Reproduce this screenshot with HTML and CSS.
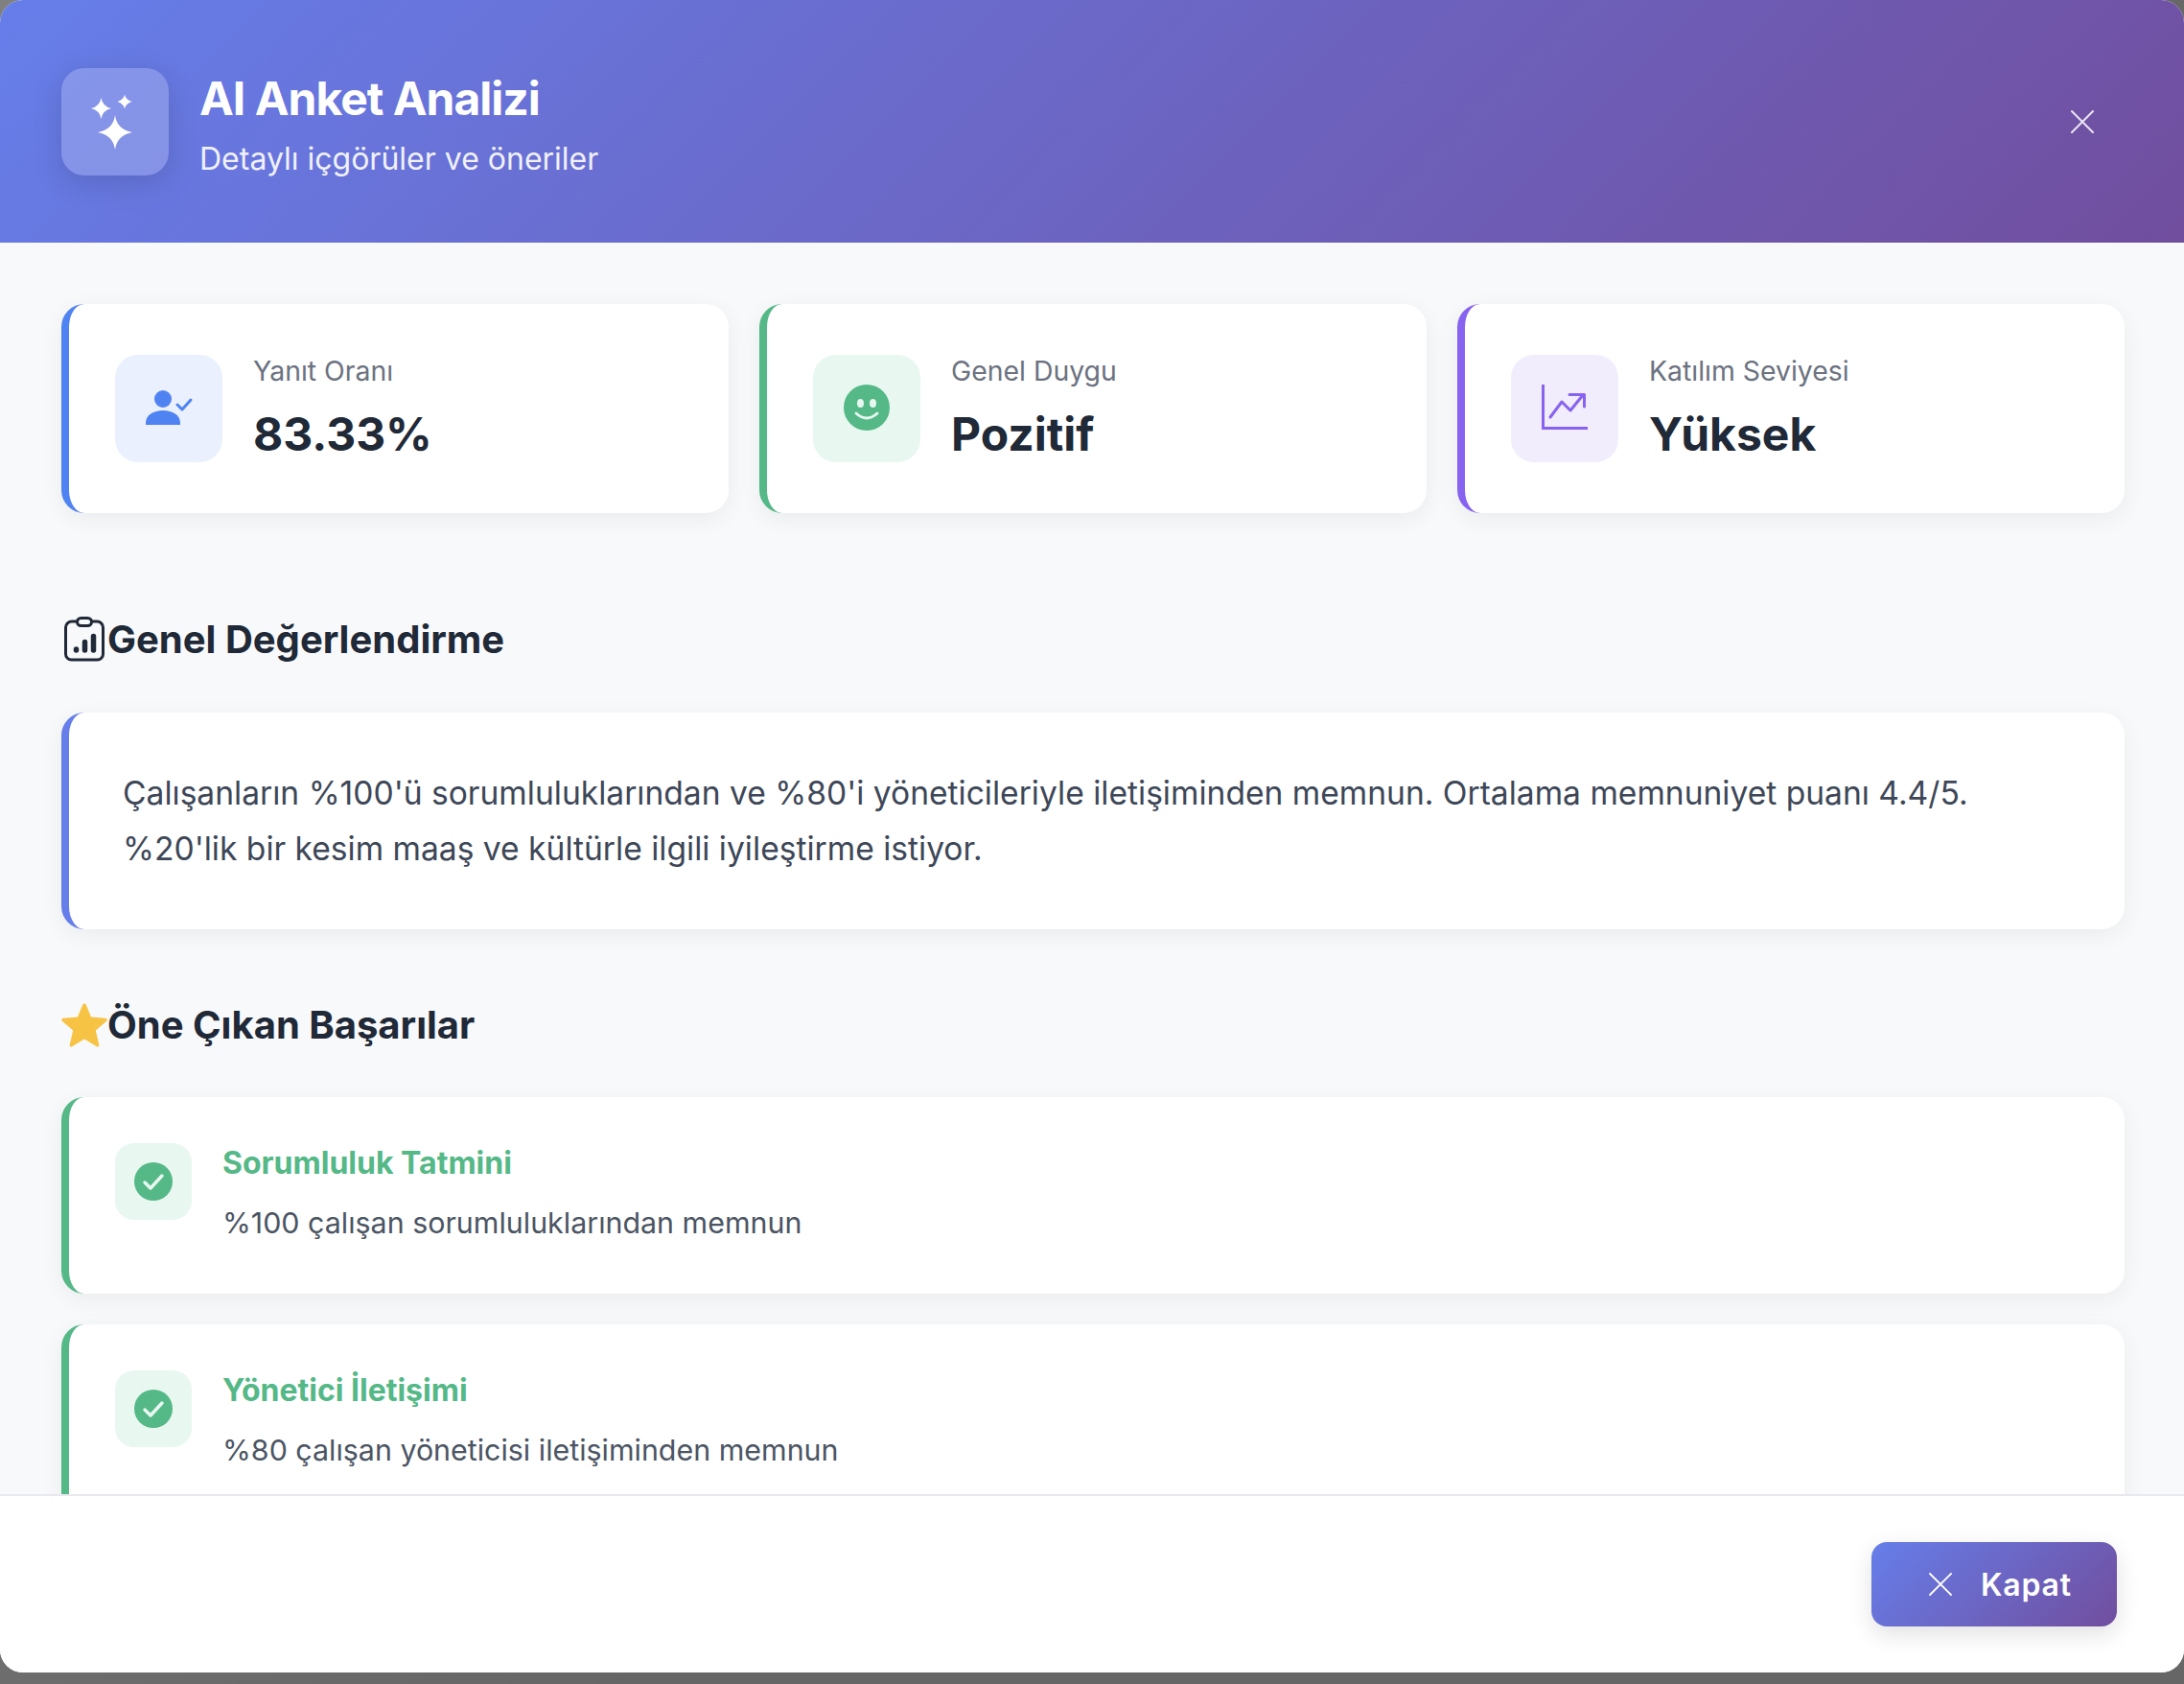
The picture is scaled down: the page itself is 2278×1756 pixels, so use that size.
FILE: index.html
```html
<!DOCTYPE html>
<html lang="tr">
<head>
    <meta charset="UTF-8">
    <meta name="viewport" content="width=device-width, initial-scale=1.0">
    <title>AI Anket Analizi</title>
    <link rel="stylesheet" href="styles.css">
</head>
<body>
    <div class="modal">
        <div class="modal-header">
            <div class="header-left">
                <div class="header-icon">
                    <svg width="112" height="112" viewBox="64 70 112 112" fill="#fff">
                        <path d="M120 119Q122 134 138 137Q122 140 120 155Q118 140 102 137Q118 134 120 119Z"/>
                        <path d="M105.500 101Q107 110 116 112Q107 114 105.500 123Q104 114 95 112Q104 110 105.500 101Z"/>
                        <path d="M130 97.500Q131 103 137.500 105Q131 107 130 112.500Q129 107 122.500 105Q129 103 130 97.500Z"/>
                    </svg>
                </div>
                <div class="header-text">
                    <h2 class="header-title">AI Anket Analizi</h2>
                    <p class="header-sub">Detaylı içgörüler ve öneriler</p>
                </div>
            </div>
            <svg class="header-close" width="24" height="24" viewBox="0 0 24 24" fill="none" stroke="#fff" stroke-opacity="0.85" stroke-width="2" stroke-linecap="round">
                <path d="M1 1L23 23M23 1L1 23"/>
            </svg>
        </div>

        <div class="modal-body">
            <div class="stats">
                <div class="stat-card blue">
                    <div class="stat-icon">
                        <svg width="112" height="112" viewBox="120 370 112 112">
                            <circle cx="170" cy="416" r="9" fill="#4f83f1"/>
                            <path d="M152 443V441C152 433 160 428 170 428C180 428 188 433 188 441V443Z" fill="#4f83f1"/>
                            <path d="M185 422L190 427L199 417" fill="none" stroke="#4f83f1" stroke-width="3" stroke-linecap="round" stroke-linejoin="round"/>
                        </svg>
                    </div>
                    <div>
                        <div class="stat-label">Yanıt Oranı</div>
                        <div class="stat-value">83.33%</div>
                    </div>
                </div>
                <div class="stat-card green">
                    <div class="stat-icon">
                        <svg width="112" height="112" viewBox="848 370 112 112">
                            <circle cx="904" cy="425" r="24" fill="#54b887"/>
                            <ellipse cx="897.500" cy="420.500" rx="3.500" ry="4.500" fill="#e8f7f0"/>
                            <ellipse cx="910.500" cy="420.500" rx="3.500" ry="4.500" fill="#e8f7f0"/>
                            <path d="M893 431Q904 441 915 431" fill="none" stroke="#e8f7f0" stroke-width="3" stroke-linecap="round"/>
                        </svg>
                    </div>
                    <div>
                        <div class="stat-label">Genel Duygu</div>
                        <div class="stat-value">Pozitif</div>
                    </div>
                </div>
                <div class="stat-card purple">
                    <div class="stat-icon">
                        <svg width="112" height="112" viewBox="1576 370 112 112" fill="none" stroke="#8763f0" stroke-width="3">
                            <path d="M1609.500 401V446.500H1656"/>
                            <path d="M1617 435L1629 419L1638 428L1651 412M1637 411.500H1652.500V424" stroke-linecap="round" stroke-linejoin="round"/>
                        </svg>
                    </div>
                    <div>
                        <div class="stat-label">Katılım Seviyesi</div>
                        <div class="stat-value">Yüksek</div>
                    </div>
                </div>
            </div>

            <h3 class="section-title">
                <svg class="section-icon" width="48" height="48" viewBox="64 643 48 48" fill="none" stroke="#1f2937" stroke-width="3">
                    <path d="M80 648H75A6.500 6.500 0 0 0 68.500 654.500V682A6 6 0 0 0 74.500 688H101.500A6 6 0 0 0 107.500 682V654.500A6.500 6.500 0 0 0 101 648H96"/>
                    <rect x="80.500" y="644.500" width="15" height="8" rx="4"/>
                    <path d="M79.500 677V678M88.500 669.500V678M97.500 663.500V678" stroke-width="5.500" stroke-linecap="round"/>
                </svg>
                Genel Değerlendirme
            </h3>
            <div class="summary-card">
                Çalışanların %100'ü sorumluluklarından ve %80'i yöneticileriyle iletişiminden memnun. Ortalama memnuniyet puanı 4.4/5. %20'lik bir kesim maaş ve kültürle ilgili iyileştirme istiyor.
            </div>

            <h3 class="section-title title-second">
                <svg class="section-icon" width="48" height="48" viewBox="0 0 48 48">
                    <path d="M24 1.500C24.800 1.500 25.400 2 25.800 2.800L31 15.500L46 16.800C47.800 17 48.200 18.600 47.200 19.700L35.800 29.500L39.300 44.500C39.600 46 38.200 47.200 36.800 46.300L24 38.500L11.200 46.300C9.800 47.200 8.400 46 8.700 44.500L12.200 29.500L0.800 19.700C-0.200 18.600 0.200 17 2 16.800L17 15.500L22.200 2.800C22.600 2 23.200 1.500 24 1.500Z" fill="#f6c344"/>
                </svg>
                Öne Çıkan Başarılar
            </h3>
            <div class="item-card">
                <div class="item-icon">
                    <svg width="80" height="80" viewBox="0 0 80 80">
                        <circle cx="40" cy="40" r="20" fill="#54b887"/>
                        <path d="M31 41L37 47L49 34" fill="none" stroke="#e8f7f0" stroke-width="3.500" stroke-linecap="round" stroke-linejoin="round"/>
                    </svg>
                </div>
                <div>
                    <div class="item-title">Sorumluluk Tatmini</div>
                    <div class="item-text">%100 çalışan sorumluluklarından memnun</div>
                </div>
            </div>
            <div class="item-card">
                <div class="item-icon">
                    <svg width="80" height="80" viewBox="0 0 80 80">
                        <circle cx="40" cy="40" r="20" fill="#54b887"/>
                        <path d="M31 41L37 47L49 34" fill="none" stroke="#e8f7f0" stroke-width="3.500" stroke-linecap="round" stroke-linejoin="round"/>
                    </svg>
                </div>
                <div>
                    <div class="item-title">Yönetici İletişimi</div>
                    <div class="item-text">%80 çalışan yöneticisi iletişiminden memnun</div>
                </div>
            </div>
        </div>

        <div class="modal-footer">
            <button class="close-btn">
                <svg width="24" height="24" viewBox="0 0 24 24" fill="none" stroke="#fff" stroke-width="1.800" stroke-linecap="round">
                    <path d="M1 1L23 23M23 1L1 23"/>
                </svg>
                Kapat
            </button>
        </div>
    </div>
</body>
</html>
```
FILE: styles.css
```css
* {
    box-sizing: border-box;
}
body {
    font-family: Inter, "Noto Sans", sans-serif;
    background: linear-gradient(135deg, #808080, #666666 60%);
    margin: 0;
    height: 100vh;
    overflow: hidden;
}
.modal {
    height: 1744px;
    display: flex;
    flex-direction: column;
    background: white;
    border-radius: 24px;
    overflow: hidden;
}
.modal-header {
    flex: none;
    height: 253px;
    padding: 0 64px;
    display: flex;
    align-items: center;
    justify-content: space-between;
    background: linear-gradient(135deg, #667eea 0%, #714e9e 100%);
    color: white;
}
.header-left {
    display: flex;
    align-items: center;
    gap: 32px;
}
.header-icon {
    width: 112px;
    height: 112px;
    border-radius: 24px;
    background: rgba(255, 255, 255, 0.2);
    box-shadow: 0 8px 32px rgba(0, 0, 0, 0.14);
}
.header-icon svg {
    display: block;
}
.header-text {
    padding-top: 6px;
}
.header-title {
    font-size: 48px;
    font-weight: 700;
    letter-spacing: -1px;
    line-height: 58px;
    margin: 0 0 14px;
}
.header-sub {
    font-size: 32px;
    line-height: 40px;
    margin: 0;
    opacity: 0.9;
}
.header-close {
    margin-right: 30px;
}
.modal-body {
    flex: 1;
    min-height: 0;
    overflow: hidden;
    padding: 64px 62px 0 64px;
    background: #f8f9fa;
}
.stats {
    display: grid;
    grid-template-columns: repeat(3, 1fr);
    gap: 32px;
}
.stat-card {
    height: 218px;
    padding: 0 48px;
    display: flex;
    align-items: center;
    gap: 32px;
    background: white;
    border-radius: 24px;
    border-left: 8px solid;
    box-shadow: 0 6px 24px rgba(0, 0, 0, 0.06);
}
.stat-icon {
    width: 112px;
    height: 112px;
    border-radius: 24px;
}
.stat-icon svg {
    display: block;
}
.stat-card.blue {
    border-color: #4f83f1;
}
.stat-card.blue .stat-icon {
    background: #eaf0fd;
}
.stat-card.green {
    border-color: #54b887;
}
.stat-card.green .stat-icon {
    background: #e8f7f0;
}
.stat-card.purple {
    border-color: #8763f0;
}
.stat-card.purple .stat-icon {
    background: #f1edfd;
}
.stat-label {
    font-size: 28.4px;
    line-height: 34px;
    color: #6b7280;
    margin-bottom: 20px;
}
.stat-value {
    font-size: 48px;
    font-weight: 700;
    line-height: 58px;
    color: #1f2937;
}
.section-title {
    display: flex;
    align-items: center;
    font-size: 40px;
    font-weight: 700;
    line-height: 48px;
    color: #1f2937;
    margin: 108px 0 52px;
}
.title-second {
    margin: 76px 0 51px;
}
.section-icon {
    flex: none;
}
.summary-card {
    height: 226px;
    padding: 55px 56px;
    font-size: 33.6px;
    line-height: 58px;
    color: #3d4757;
    background: white;
    border-radius: 24px;
    border-left: 8px solid #667eea;
    box-shadow: 0 6px 24px rgba(0, 0, 0, 0.06);
}
.item-card {
    height: 205px;
    padding: 48px;
    margin-bottom: 32px;
    display: flex;
    gap: 32px;
    background: white;
    border-radius: 24px;
    border-left: 8px solid #54b887;
    box-shadow: 0 6px 24px rgba(0, 0, 0, 0.06);
}
.item-icon {
    flex: none;
    width: 80px;
    height: 80px;
    border-radius: 20px;
    background: #e8f7f0;
}
.item-icon svg {
    display: block;
}
.item-title {
    font-size: 32px;
    font-weight: 700;
    line-height: 42px;
    color: #54b887;
    margin-bottom: 21px;
}
.item-text {
    font-size: 30.4px;
    line-height: 40px;
    color: #4b5563;
}
.modal-footer {
    flex: none;
    height: 186px;
    padding: 48px 70px 48px 0;
    display: flex;
    justify-content: flex-end;
    background: white;
    border-top: 2px solid #e8e8ee;
}
.close-btn {
    width: 256px;
    height: 88px;
    padding: 0 0 0 60px;
    display: flex;
    align-items: center;
    gap: 30px;
    font-family: inherit;
    font-size: 32px;
    font-weight: 600;
    letter-spacing: 0.8px;
    color: white;
    border: none;
    border-radius: 16px;
    background: linear-gradient(135deg, #667eea 0%, #714e9e 100%);
    box-shadow: 0 8px 24px rgba(0, 0, 0, 0.12);
    cursor: pointer;
}
```
